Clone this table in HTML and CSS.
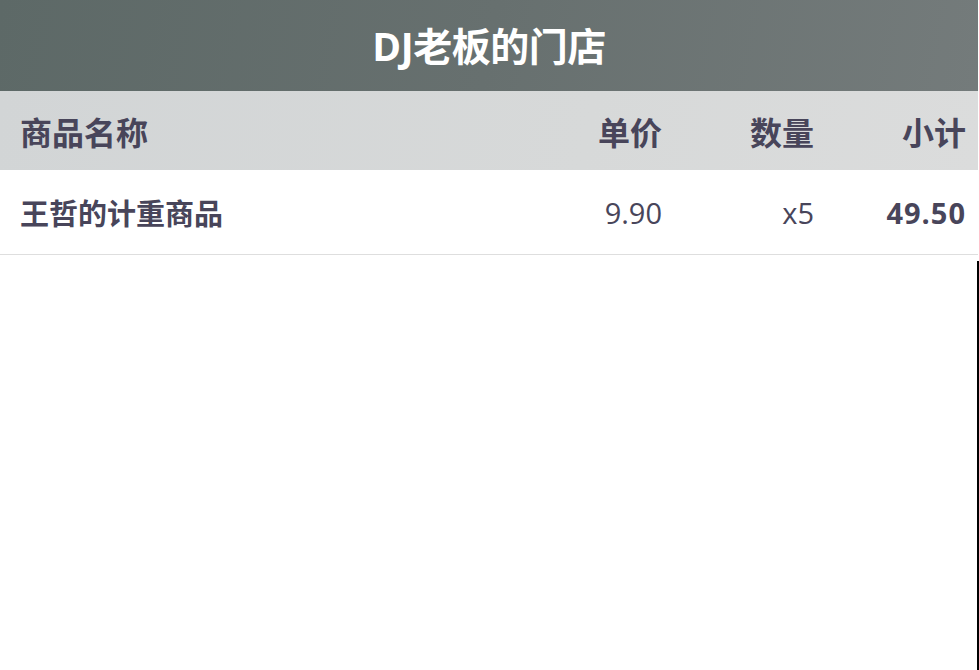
FILE: index.html
```html
<!DOCTYPE html>
<html lang="zh">
<head>
<meta charset="utf-8">
<title>DJ老板的门店</title>
<link rel="stylesheet" href="styles.css">
</head>
<body>
<div class="page">
  <header class="shop-header">
    <h1 class="shop-title">DJ老板的门店</h1>
  </header>
  <div class="table">
    <div class="row head">
      <div class="cell name">商品名称</div>
      <div class="cell num">单价</div>
      <div class="cell num">数量</div>
      <div class="cell num">小计</div>
    </div>
    <div class="row item">
      <div class="cell name">王哲的计重商品</div>
      <div class="cell num">9.90</div>
      <div class="cell num">x5</div>
      <div class="cell num strong">49.50</div>
    </div>
  </div>
  <div class="edge-line"></div>
</div>
</body>
</html>
```
FILE: styles.css
```css
html, body {
  margin: 0;
  padding: 0;
  background: #ffffff;
}
body {
  font-family: "Open Sans", "Noto Sans CJK SC", sans-serif;
  color: #48455a;
}
.page {
  position: relative;
  width: 978px;
  height: 670px;
}
.shop-header {
  height: 91px;
  background: linear-gradient(100deg, #5d6967 0%, #67706f 50%, #747b7b 100%);
  display: flex;
  align-items: center;
  justify-content: center;
}
.shop-title {
  margin: 0;
  font-size: 39px;
  font-weight: 700;
  color: #ffffff;
  line-height: 1;
  letter-spacing: -0.5px;
}
.row {
  display: grid;
  grid-template-columns: 1fr 152px 152px 152px;
  align-items: center;
  padding: 0 12px 0 20px;
}
.row.head {
  height: 79px;
  background: linear-gradient(100deg, #d2d5d6 0%, #d7d9d9 60%, #dbdcdc 100%);
  font-size: 32px;
  font-weight: 700;
}
.row.item {
  height: 84px;
  border-bottom: 1px solid #dedede;
  font-size: 29px;
}
.row.item .name {
  font-weight: 700;
}
.cell.num {
  text-align: right;
}
.cell.strong {
  font-weight: 700;
  letter-spacing: 1px;
}
.edge-line {
  position: absolute;
  left: 977px;
  top: 261px;
  width: 2px;
  height: 409px;
  background: #000000;
}
```
